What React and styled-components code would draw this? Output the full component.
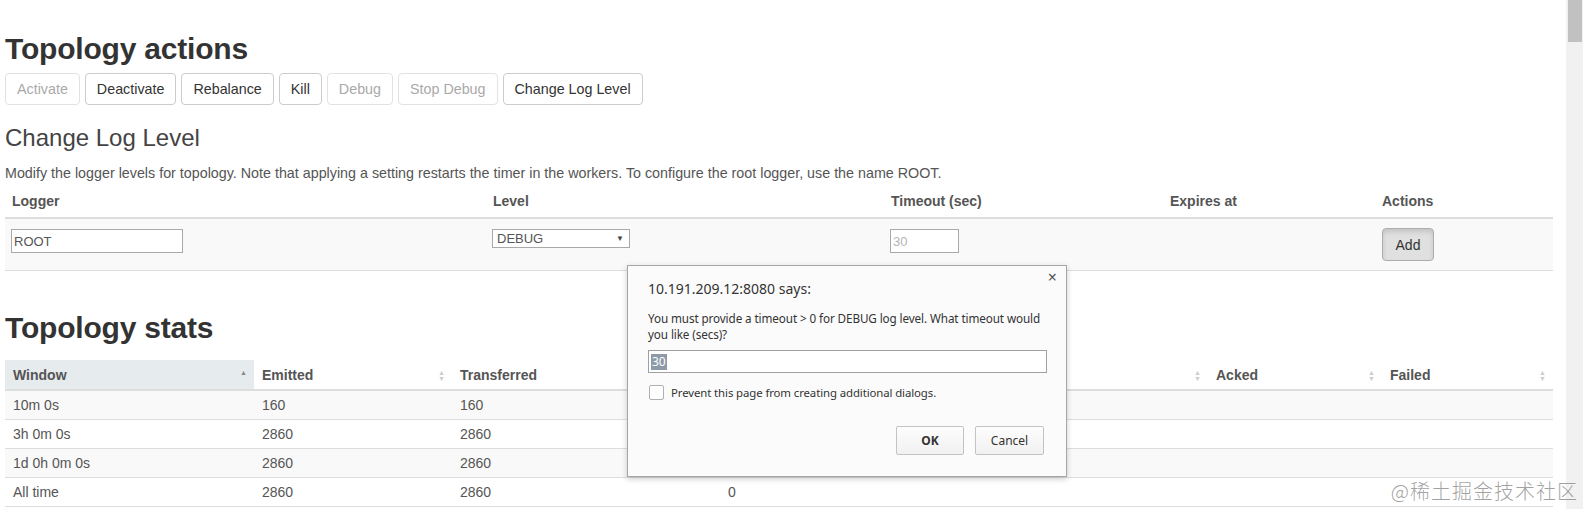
import React from 'react';
import styled, { createGlobalStyle } from 'styled-components';

const GlobalStyle = createGlobalStyle`
	html, body {
		margin: 0;
		padding: 0;
		background: #fff;
		overflow: hidden;
	}
	body {
		font-family: 'Liberation Sans', Arial, sans-serif;
		font-size: 14px;
		color: #333;
	}
`;

const Page = styled.div`
	position: relative;
	display: flex;
	width: 1586px;
	height: 509px;
	overflow: hidden;
`;

const Main = styled.main`
	flex: 1;
	padding: 0 13px 0 5px;
	min-width: 0;
`;

const ScrollTrack = styled.div`
	width: 17px;
	margin-right: 3px;
	background: #f1f1f1;
	display: flex;
	flex-direction: column;
	align-items: center;
`;

const ScrollThumb = styled.div`
	width: 14px;
	height: 42px;
	background: #c1c1c1;
`;

const Heading = styled.h2`
	font-size: 30px;
	font-weight: 700;
	color: #333;
	margin: ${p => p.$top}px 0 ${p => p.$bottom}px;
	line-height: 33px;
	letter-spacing: -0.2px;
`;

const ButtonRow = styled.div`
	display: flex;
	gap: 5px;
`;

const Btn = styled.button`
	height: 32px;
	padding: 0 11px;
	font-family: 'Liberation Sans', Arial, sans-serif;
	font-size: 14.3px;
	background: #fff;
	border: 1px solid ${p => (p.disabled ? '#e2e2e2' : '#cccccc')};
	border-radius: 4px;
	color: ${p => (p.disabled ? '#a9a9a9' : '#333')};
`;

const SubHeading = styled.h3`
	font-size: 24px;
	font-weight: 400;
	color: #444;
	margin: 19px 0 11px;
	line-height: 28px;
`;

const Note = styled.p`
	margin: 0 0 1px;
	font-size: 14.3px;
	color: #555;
	line-height: 20px;
`;

const Table = styled.table`
	width: 100%;
	border-collapse: collapse;
	table-layout: fixed;
`;

const Th = styled.th`
	text-align: left;
	font-size: 14px;
	font-weight: 700;
	color: #555;
	padding: ${p => (p.$tall ? '7px 7px 6px' : '5px 8px 4px')};
	border-bottom: 2px solid #dddddd;
	line-height: 20px;
	position: relative;
	background: ${p => (p.$sorted ? '#e6ebee' : 'transparent')};
`;

const SortIcon = styled.span`
	position: absolute;
	right: 7px;
	top: 10px;
	display: flex;
	flex-direction: column;
	gap: 1px;
	color: ${p => (p.$active ? '#888' : '#ccc')};
	font-size: 7px;
	line-height: 5px;
`;

const Tr = styled.tr`
	background: ${p => (p.$striped ? '#f9f9f9' : '#fff')};
`;

const Td = styled.td`
	padding: ${p => (p.$tall ? '10px 6px 9px' : '4px 8px')};
	border-bottom: 1px solid #dddddd;
	color: #555;
	font-size: 14px;
	line-height: 20px;
	vertical-align: ${p => (p.$tall ? 'top' : 'middle')};
	height: ${p => (p.$tall ? '32px' : 'auto')};
`;

const TextInput = styled.input`
	width: ${p => p.$w}px;
	height: 24px;
	box-sizing: border-box;
	border: 1px solid #a9a9a9;
	padding: 1px 2px;
	font-family: 'Liberation Sans', Arial, sans-serif;
	font-size: 13px;
	color: #555;
	background: #fff;
	&::placeholder {
		color: #b5b5b5;
	}
`;

const Select = styled.div`
	width: 138px;
	height: 19px;
	box-sizing: border-box;
	border: 1px solid #a9a9a9;
	display: flex;
	align-items: center;
	justify-content: space-between;
	padding: 0 5px 0 4px;
	font-size: 13px;
	color: #555;
	background: #fff;
	span {
		font-size: 8px;
		color: #444;
	}
`;

const AddBtn = styled.button`
	width: 52px;
	height: 33px;
	margin: -1px 0 0 1px;
	font-family: 'Liberation Sans', Arial, sans-serif;
	font-size: 14px;
	color: #333;
	background: #e0e0e0;
	border: 1px solid #adadad;
	border-radius: 4px;
	box-shadow: inset 0 3px 5px rgba(0, 0, 0, 0.125);
`;

const Dialog = styled.div`
	position: absolute;
	left: 627px;
	top: 265px;
	width: 440px;
	height: 212px;
	box-sizing: border-box;
	background: #fbfbfb;
	border: 1px solid #a6a6a6;
	box-shadow: 0 2px 6px rgba(0, 0, 0, 0.2);
	padding: 12px 19px 0 20px;
	font-family: 'Noto Sans', 'Open Sans', sans-serif;
	color: #333;
`;

const Close = styled.span`
	position: absolute;
	right: 9px;
	top: 0;
	font-size: 16px;
	color: #555;
`;

const DialogTitle = styled.div`
	font-size: 14px;
	line-height: 20px;
	margin-top: 1px;
`;

const DialogMsg = styled.div`
	font-size: 11.7px;
	letter-spacing: -0.1px;
	line-height: 16px;
	margin-top: 11px;
	white-space: nowrap;
`;

const PromptInput = styled.div`
	margin-top: 8px;
	height: 23px;
	box-sizing: border-box;
	border: 1px solid #a0a0a0;
	background: #fff;
	display: flex;
	align-items: center;
	padding-left: 2px;
	span {
		background: #8e9aa8;
		color: #fff;
		font-size: 12px;
		line-height: 16px;
		padding: 0 1px;
	}
`;

const CheckRow = styled.label`
	display: flex;
	align-items: center;
	gap: 7px;
	margin-top: 12px;
	font-size: 11.4px;
	letter-spacing: -0.1px;
`;

const CheckBox = styled.span`
	width: 13px;
	height: 13px;
	border: 1px solid #b0b0b0;
	border-radius: 2px;
	background: #fff;
	margin-left: 1px;
`;

const DialogButtons = styled.div`
	display: flex;
	justify-content: flex-end;
	gap: 11px;
	margin-top: 26px;
	padding-right: 3px;
`;

const DialogBtn = styled.button`
	width: ${p => p.$w}px;
	height: 29px;
	font-family: 'Noto Sans', 'Open Sans', sans-serif;
	font-size: 12px;
	font-weight: ${p => (p.$primary ? 700 : 400)};
	color: #333;
	background: linear-gradient(#fdfdfd, #f1f1f1);
	border: 1px solid #c3c3c3;
	border-radius: 2px;
`;

const Watermark = styled.div`
	position: absolute;
	right: 8px;
	bottom: 4px;
	font-family: 'Noto Sans CJK SC', sans-serif;
	font-weight: 300;
	font-size: 20px;
	color: rgba(120, 120, 120, 0.7);
	letter-spacing: 1px;
`;

const Sort = ({ active }) => (
	<SortIcon $active={active}>
		<span>▲</span>
		{!active && <span>▼</span>}
	</SortIcon>
);

// widths add up to the table width so nothing gets redistributed
const statCols = [
	{ name: 'Window', w: 249 },
	{ name: 'Emitted', w: 198 },
	{ name: 'Transferred', w: 268 },
	{ name: 'Complete latency (ms)', w: 488 },
	{ name: 'Acked', w: 174 },
	{ name: 'Failed', w: 171 },
];

const statRows = [
	['10m 0s', '160', '160', '0', '', ''],
	['3h 0m 0s', '2860', '2860', '0', '', ''],
	['1d 0h 0m 0s', '2860', '2860', '0', '', ''],
	['All time', '2860', '2860', '0', '', ''],
];

export default function App() {
	return (
		<Page>
			<GlobalStyle />
			<Main>
				<Heading $top={32} $bottom={8}>
					Topology actions
				</Heading>
				<ButtonRow>
					<Btn disabled>Activate</Btn>
					<Btn>Deactivate</Btn>
					<Btn>Rebalance</Btn>
					<Btn>Kill</Btn>
					<Btn disabled>Debug</Btn>
					<Btn disabled>Stop Debug</Btn>
					<Btn>Change Log Level</Btn>
				</ButtonRow>

				<SubHeading>Change Log Level</SubHeading>
				<Note>
					Modify the logger levels for topology. Note that applying a setting restarts the timer in the workers. To
					configure the root logger, use the name ROOT.
				</Note>
				<Table>
					<colgroup>
						<col style={{ width: 481 }} />
						<col style={{ width: 398 }} />
						<col style={{ width: 279 }} />
						<col style={{ width: 212 }} />
						<col />
					</colgroup>
					<thead>
						<tr>
							<Th $tall>Logger</Th>
							<Th $tall>Level</Th>
							<Th $tall>Timeout (sec)</Th>
							<Th $tall>Expires at</Th>
							<Th $tall>Actions</Th>
						</tr>
					</thead>
					<tbody>
						<Tr $striped>
							<Td $tall>
								<TextInput $w={172} defaultValue="ROOT" />
							</Td>
							<Td $tall>
								<Select>
									DEBUG <span>▼</span>
								</Select>
							</Td>
							<Td $tall>
								<TextInput $w={69} placeholder="30" />
							</Td>
							<Td $tall></Td>
							<Td $tall>
								<AddBtn>Add</AddBtn>
							</Td>
						</Tr>
					</tbody>
				</Table>

				<Heading $top={40} $bottom={16}>
					Topology stats
				</Heading>
				<Table>
					<colgroup>
						{statCols.map(c => (
							<col key={c.name} style={{ width: c.w }} />
						))}
					</colgroup>
					<thead>
						<tr>
							{statCols.map((c, i) => (
								<Th key={c.name} $sorted={i === 0}>
									{c.name}
									<Sort active={i === 0} />
								</Th>
							))}
						</tr>
					</thead>
					<tbody>
						{statRows.map((r, i) => (
							<Tr key={r[0]} $striped={i % 2 === 0}>
								{r.map((v, j) => (
									<Td key={j}>{v}</Td>
								))}
							</Tr>
						))}
					</tbody>
				</Table>
			</Main>
			<ScrollTrack>
				<ScrollThumb />
			</ScrollTrack>

			<Dialog>
				<Close>×</Close>
				<DialogTitle>10.191.209.12:8080 says:</DialogTitle>
				<DialogMsg>
					You must provide a timeout &gt; 0 for DEBUG log level. What timeout would
					<br />
					you like (secs)?
				</DialogMsg>
				<PromptInput>
					<span>30</span>
				</PromptInput>
				<CheckRow>
					<CheckBox />
					Prevent this page from creating additional dialogs.
				</CheckRow>
				<DialogButtons>
					<DialogBtn $w={68} $primary>
						OK
					</DialogBtn>
					<DialogBtn $w={69}>Cancel</DialogBtn>
				</DialogButtons>
			</Dialog>

			<Watermark>@稀土掘金技术社区</Watermark>
		</Page>
	);
}
